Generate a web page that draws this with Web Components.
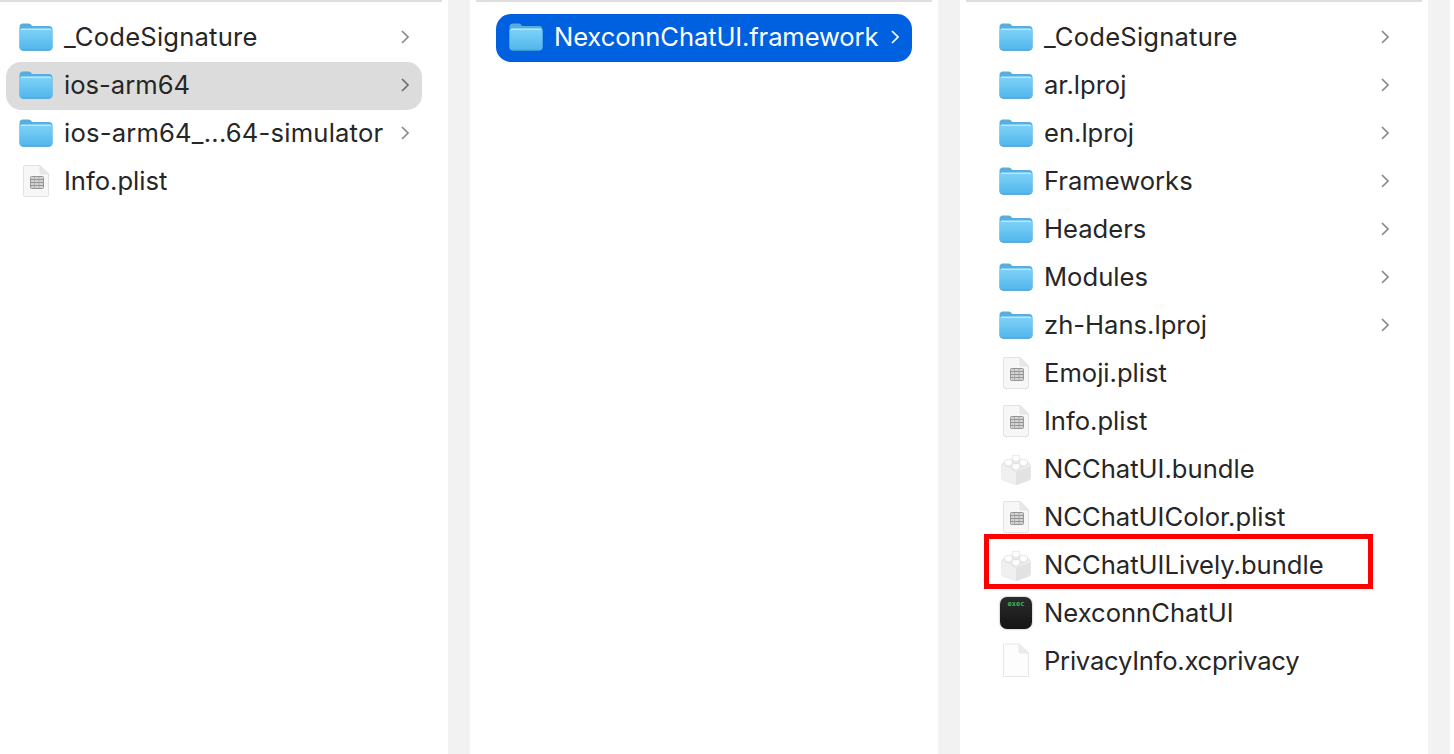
<!DOCTYPE html>
<html>
<head>
<meta charset="utf-8">
<style>
    html, body { margin: 0; padding: 0; background: white; }
    body { width: 1454px; height: 754px; overflow: hidden; font-family: Inter, "Liberation Sans", sans-serif; }
</style>
</head>
<body>
<finder-browser>
    <finder-column first>
        <finder-row icon="folder" chevron style="letter-spacing:.2px">_CodeSignature</finder-row>
        <finder-row icon="folder" chevron state="inactive">ios-arm64</finder-row>
        <finder-row icon="folder" chevron style="letter-spacing:.2px">ios-arm64_...64-simulator</finder-row>
        <finder-row icon="plist">Info.plist</finder-row>
    </finder-column>
    <finder-column>
        <finder-row icon="folder" chevron state="active" style="letter-spacing:-.13px">NexconnChatUI.framework</finder-row>
    </finder-column>
    <finder-column>
        <finder-row icon="folder" chevron style="letter-spacing:.2px">_CodeSignature</finder-row>
        <finder-row icon="folder" chevron>ar.lproj</finder-row>
        <finder-row icon="folder" chevron>en.lproj</finder-row>
        <finder-row icon="folder" chevron>Frameworks</finder-row>
        <finder-row icon="folder" chevron>Headers</finder-row>
        <finder-row icon="folder" chevron>Modules</finder-row>
        <finder-row icon="folder" chevron>zh-Hans.lproj</finder-row>
        <finder-row icon="plist">Emoji.plist</finder-row>
        <finder-row icon="plist">Info.plist</finder-row>
        <finder-row icon="bundle">NCChatUI.bundle</finder-row>
        <finder-row icon="plist">NCChatUIColor.plist</finder-row>
        <finder-row icon="bundle" marked>NCChatUILively.bundle</finder-row>
        <finder-row icon="exec">NexconnChatUI</finder-row>
        <finder-row icon="blank" style="letter-spacing:-.24px">PrivacyInfo.xcprivacy</finder-row>
    </finder-column>
</finder-browser>

<script>
let iconId = 0;
const icons = {
    folder: (id) => `
<svg width="34" height="28" viewBox="0 0 34 28" style="margin-top:-2px">
    <defs>
        <linearGradient id="f${id}" x1="0" y1="0" x2="0" y2="1">
            <stop offset="0" stop-color="#7ed3f7"/>
            <stop offset="1" stop-color="#53b6ec"/>
        </linearGradient>
    </defs>
    <path d="M0.5 4 Q0.5 0.5 4 0.5 H9.5 Q11 0.5 12 1.6 L13 3 H30 Q33.5 3 33.5 6.5 V24 Q33.5 27.5 30 27.5 H4 Q0.5 27.5 0.5 24 Z" fill="#55aede"/>
    <path d="M0.5 8 Q0.5 5.5 3.5 5.5 H30.5 Q33.5 5.5 33.5 8 V24 Q33.5 27 30 27 H4 Q0.5 27 0.5 24 Z" fill="url(#f${id})"/>
    <path d="M2 6.2 H32" stroke="#d4f1fc" stroke-width="1"/>
    <path d="M3 27.2 H31" stroke="#459fd6" stroke-width="1"/>
</svg>`,
    plist: () => `
<svg width="26" height="32" viewBox="0 0 26 32" style="margin-top:-2px">
    <path d="M0.5 2 Q0.5 0.5 2 0.5 H17 L25.5 9 V30 Q25.5 31.5 24 31.5 H2 Q0.5 31.5 0.5 30 Z" fill="#f7f7f7" stroke="#e2e2e2"/>
    <path d="M17 0.5 V7.5 Q17 9 18.5 9 H25.5 Z" fill="#e8e8e8" stroke="#dcdcdc" stroke-width="0.6"/>
    <rect x="7.5" y="11.5" width="13" height="12" rx="1" fill="#d2d2d2" stroke="#969696"/>
    <path d="M7.5 14.5 H20.5 M7.5 17.5 H20.5 M7.5 20.5 H20.5" stroke="#969696" stroke-width="1"/>
    <path d="M11.5 11.5 V23.5 M16 11.5 V23.5" stroke="#a2a2a2" stroke-width="0.7"/>
</svg>`,
    blank: () => `
<svg width="26" height="34" viewBox="0 0 26 34" style="margin-top:-4px">
    <path d="M0.5 1 H16 L25.5 10 V33.5 H0.5 Z" fill="#fdfdfd" stroke="#e6e6e6"/>
    <path d="M16 1 V8.5 Q16 10 17.5 10 H25.5 Z" fill="#ededed" stroke="#e0e0e0" stroke-width="0.6"/>
</svg>`,
    bundle: () => `
<svg width="30" height="30" viewBox="0 0 30 30" style="margin-top:-1px">
    <path d="M15 4 L28 8 Q29.5 8.5 29.5 10 V23 Q29.5 24.6 28 25.2 L16 29.6 Q15 30 14 29.6 L2 25.2 Q0.5 24.6 0.5 23 V10 Q0.5 8.5 2 8 Z" fill="#f0f0f0" stroke="#e4e4e4" stroke-width="0.6"/>
    <path d="M15 17 L29.5 11 V23 Q29.5 24.6 28 25.2 L16 29.6 Q15.5 29.8 15 29.8 Z" fill="#e2e2e2"/>
    <path d="M15 3 L29 9.5 L15 17 L1 9.5 Z" fill="#ebebeb"/>
    <g fill="#f7f7f7" stroke="#d6d6d6" stroke-width="0.7">
        <path d="M11 2.5 V4.5 A4 2.4 0 0 0 19 4.5 V2.5 A4 2.4 0 0 0 11 2.5 Z"/>
        <path d="M3.5 7 V9 A4 2.4 0 0 0 11.5 9 V7 A4 2.4 0 0 0 3.5 7 Z"/>
        <path d="M18.5 7 V9 A4 2.4 0 0 0 26.5 9 V7 A4 2.4 0 0 0 18.5 7 Z"/>
        <path d="M11 11 V13 A4 2.4 0 0 0 19 13 V11 A4 2.4 0 0 0 11 11 Z"/>
    </g>
    <g fill="#fdfdfd">
        <ellipse cx="15" cy="2.5" rx="3.6" ry="2"/>
        <ellipse cx="7.5" cy="7" rx="3.6" ry="2"/>
        <ellipse cx="22.5" cy="7" rx="3.6" ry="2"/>
        <ellipse cx="15" cy="11" rx="3.6" ry="2"/>
    </g>
</svg>`,
    exec: () => `<span class="exec">exec</span>`
};

let fileIconTemplate = document.createElement('template');
fileIconTemplate.innerHTML = `
<style>
    :host {
        display: flex;
        width: 34px;
        height: 34px;
        flex: none;
        align-items: center;
        justify-content: center;
    }
    svg { display: block; flex: none; }
    .exec {
        box-sizing: border-box;
        display: block;
        width: 32px;
        height: 32px;
        margin-top: -2px;
        border-radius: 7px;
        background: linear-gradient(#2b2b2b, #151515);
        box-shadow: 0 0 2px rgba(0,0,0,0.45);
        color: #2fbf57;
        font: bold 7px/1 "DejaVu Sans Mono", monospace;
        letter-spacing: 0;
        text-align: center;
        padding-top: 4px;
    }
</style>
<div id="icon" style="display:contents"></div>
`;

class FileIcon extends HTMLElement {
    static get observedAttributes(){
        return ["name"];
    }
    constructor(){
        super();
        this.attachShadow({mode:'open'});
        this.shadowRoot.appendChild(fileIconTemplate.content.cloneNode(true));
    }
    attributeChangedCallback(attr, oldValue, name){
        this.shadowRoot.querySelector("#icon").innerHTML = icons[name](iconId++);
    }
}
window.customElements.define('file-icon', FileIcon);

let finderRowTemplate = document.createElement('template');
finderRowTemplate.innerHTML = `
<style>
    :host {
        display: flex;
        position: relative;
        align-items: center;
        box-sizing: border-box;
        height: 48px;
        padding: 0 13px;
        border-radius: 15px;
        color: #262626;
        font-size: 25.6px;
        white-space: nowrap;
    }
    :host([state="inactive"]) { background: #dcdcdc; }
    :host([state="active"]) { background: #0061e0; color: white; }
    .name { flex: 1; margin-left: 11px; margin-top: -4px; }
    .chevron { flex: none; display: none; margin-top: -2px; }
    :host([chevron]) .chevron { display: block; }
    .chevron path { fill: none; stroke: #8a8a8a; stroke-width: 1.7; }
    :host([state="inactive"]) .chevron path { stroke: #6f6f6f; }
    :host([state="active"]) .chevron path { stroke: white; }
    .mark {
        display: none;
        position: absolute;
        left: -2px;
        top: -8px;
        width: 389px;
        height: 55px;
        box-sizing: border-box;
        border: 5px solid #ff0000;
    }
    :host([marked]) .mark { display: block; }
</style>
<file-icon></file-icon>
<span class="name"><slot></slot></span>
<svg class="chevron" width="8" height="14" viewBox="0 0 8 14"><path d="M1 1 L7 7 L1 13"/></svg>
<div class="mark"></div>
`;

class FinderRow extends HTMLElement {
    constructor(){
        super();
        this.attachShadow({mode:'open'});
        this.shadowRoot.appendChild(finderRowTemplate.content.cloneNode(true));
    }
    connectedCallback(){
        this.shadowRoot.querySelector("file-icon").setAttribute("name", this.getAttribute("icon"));
    }
}

let finderColumnTemplate = document.createElement('template');
finderColumnTemplate.innerHTML = `
<style>
    :host {
        display: block;
        flex: none;
        box-sizing: border-box;
        width: 468px;
        height: 100%;
        padding: 0 26px;
        background: white;
        overflow: hidden;
    }
    :host([first]) { width: 448px; padding-left: 6px; }
    .top {
        height: 2px;
        margin: 0 -20px 12px;
        background: #dedede;
    }
    :host([first]) .top { margin-left: -6px; }
</style>
<div class="top"></div>
<slot></slot>
`;

class FinderColumn extends HTMLElement {
    constructor(){
        super();
        this.attachShadow({mode:'open'});
        this.shadowRoot.appendChild(finderColumnTemplate.content.cloneNode(true));
    }
}

let finderBrowserTemplate = document.createElement('template');
finderBrowserTemplate.innerHTML = `
<style>
    :host {
        display: flex;
        gap: 22px;
        width: 1450px;
        height: 754px;
        background: #f2f2f2;
    }
</style>
<slot></slot>
`;

class FinderBrowser extends HTMLElement {
    constructor(){
        super();
        this.attachShadow({mode:'open'});
        this.shadowRoot.appendChild(finderBrowserTemplate.content.cloneNode(true));
    }
}

window.customElements.define('finder-row', FinderRow);
window.customElements.define('finder-column', FinderColumn);
window.customElements.define('finder-browser', FinderBrowser);
</script>
</body>
</html>
